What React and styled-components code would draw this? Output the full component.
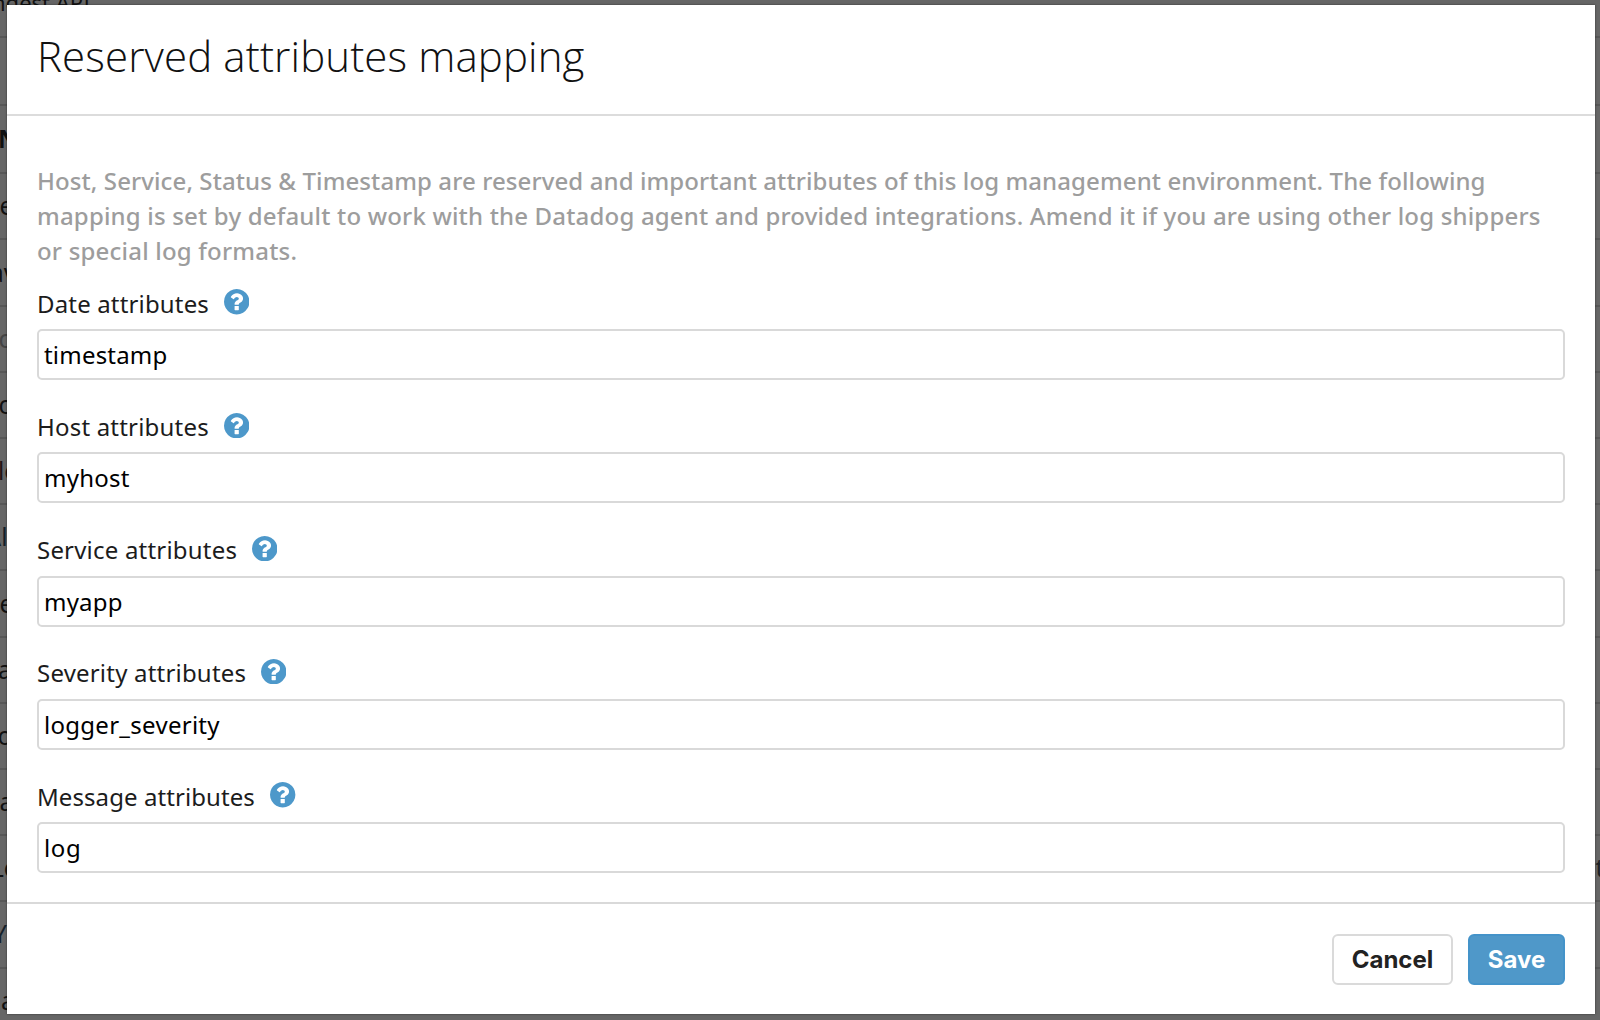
import React from "react";
import styled, { createGlobalStyle } from "styled-components";

const GlobalStyle = createGlobalStyle`
  *, *::before, *::after { box-sizing: border-box; }
  body {
    margin: 0;
    background: #666;
    font-family: "Noto Sans", "Open Sans", sans-serif;
  }
`;

const Page = styled.div`
  position: relative;
  width: 1600px;
  height: 1020px;
  overflow: hidden;
  background: #666;
`;

const Pipelines = styled.div`
  display: flex;
  flex-direction: column;
  height: 100%;
`;

const PipelineRow = styled.div`
  display: flex;
  flex: none;
  align-items: center;
  justify-content: space-between;
  height: ${(p) => p.$height || 66.2}px;
  padding-bottom: ${(p) => p.$lift || 0}px;
  border-bottom: 2px solid #575757;
  overflow: hidden;
  white-space: nowrap;
`;

const PipelineName = styled.span`
  margin-left: ${(p) => p.$shift}px;
  font-size: ${(p) => p.$size || 24.5}px;
  font-weight: ${(p) => (p.$bold ? 700 : 400)};
  line-height: 34px;
  color: ${(p) => p.$color || "#111"};
`;

const PipelineEnd = styled.span`
  width: 4.5px;
  font-size: 24.5px;
  line-height: 34px;
  color: #1d2225;
`;

const Modal = styled.section`
  position: absolute;
  top: 5px;
  left: 7px;
  display: flex;
  flex-direction: column;
  width: 1588px;
  height: 1009px;
  background: #fff;
  box-shadow: 0 0 2px rgba(0, 0, 0, 0.5);
`;

const Header = styled.header`
  height: 111px;
  padding: 21px 30px 0;
  border-bottom: 2px solid #dcdcdc;
`;

const Title = styled.h1`
  margin: 0;
  font-family: "Open Sans", sans-serif;
  font-size: 42px;
  font-weight: 300;
  line-height: 60px;
  letter-spacing: 0.12px;
  color: #111;
`;

const Body = styled.div`
  height: 786px;
  padding: 48px 30px 0;
`;

const Description = styled.p`
  margin: 0 0 20.4px;
  font-size: 24px;
  font-weight: 500;
  line-height: 34.8px;
  color: #9d9d9d;
`;

const Line = styled.span`
  display: block;
  white-space: nowrap;
  letter-spacing: ${(p) => p.$tracking}px;
`;

const Field = styled.div`
  display: flex;
  flex-direction: column;
  gap: 10.4px;
  margin: 0 0 31.8px;
`;

const Label = styled.label`
  display: flex;
  align-items: center;
  gap: ${(p) => p.$gap}px;
  height: 30px;
  font-size: 24px;
  line-height: 30px;
  letter-spacing: ${(p) => p.$tracking}px;
  color: #1c1c1c;
`;

const HelpIcon = styled.svg`
  width: 25.4px;
  height: 25.4px;
  margin-bottom: 3.2px;
  fill: #4d98ca;
`;

const Input = styled.input`
  width: 1528px;
  height: 51px;
  margin: 0;
  padding: 0 5px;
  border: 2px solid #d9d9d9;
  border-radius: 5px;
  outline: none;
  background: #fff;
  font-family: inherit;
  font-size: 24px;
  letter-spacing: ${(p) => p.$tracking}px;
  color: #000;
`;

const Footer = styled.footer`
  display: flex;
  flex: 1;
  align-items: flex-start;
  justify-content: flex-end;
  gap: 15px;
  padding: 30px 30px 0;
  border-top: 2px solid #d9d9d9;
`;

const Button = styled.button`
  width: ${(p) => p.$width}px;
  height: 51px;
  padding: 0;
  border: 2px solid ${(p) => (p.$primary ? "#4493c9" : "#dadada")};
  border-radius: 6px;
  background: ${(p) => (p.$primary ? "#4f98c9" : "#fff")};
  font-family: Inter, sans-serif;
  font-size: 24px;
  font-weight: 700;
  line-height: 47px;
  color: ${(p) => (p.$primary ? "#fff" : "#222")};
`;

const rows = [
  { text: "ngest API", shift: -8, height: 38.3, lift: 32, size: 22 },
  { text: "", shift: 0, height: 68 },
  { text: "N", shift: -2, height: 68, lift: 1, bold: true },
  { text: "e", shift: -0.5 },
  { text: "av", shift: -10 },
  { text: "c", shift: -1.5, color: "#444" },
  { text: "o", shift: -1.5 },
  { text: "lo", shift: -2, color: "#241414" },
  { text: "Al", shift: -14.5, color: "#14202a" },
  { text: "e", shift: -0.5 },
  { text: "a", shift: -2 },
  { text: "o", shift: -2.5 },
  { text: "a", shift: -0.5 },
  { text: "Lo", shift: -9, end: "t" },
  { text: "Y", shift: -7, color: "#14202a" },
  { text: "a", shift: 1 },
];

const fields = [
  { label: "Date attributes", value: "timestamp", gap: 15, tracking: 0.16, valueTracking: 0.2 },
  { label: "Host attributes", value: "myhost", gap: 15.1, tracking: 0.2, valueTracking: 0.25 },
  { label: "Service attributes", value: "myapp", gap: 14.6, tracking: 0.2, valueTracking: 0.2 },
  { label: "Severity attributes", value: "logger_severity", gap: 14.8, tracking: 0.2, valueTracking: 0.28 },
  { label: "Message attributes", value: "log", gap: 15.4, tracking: 0.08, valueTracking: 0.6 },
];

function Help() {
  return (
    <HelpIcon viewBox="0 0 1536 1536" aria-hidden="true">
      <path d="M896 1248v-192q0-14-9-23t-23-9h-192q-14 0-23 9t-9 23v192q0 14 9 23t23 9h192q14 0 23-9t9-23zm256-672q0-88-55.5-163t-138.5-116-170-41q-243 0-371 213-15 24 8 42l132 100q7 6 19 6 16 0 25-12 53-68 86-92 34-24 86-24 48 0 85.5 26t37.5 59q0 38-20 61t-68 45q-63 28-115.5 86.5t-52.5 125.5v36q0 14 9 23t23 9h192q14 0 23-9t9-23q0-19 21.5-49.5t54.5-49.5q32-18 49-28.5t46-35 44.5-48 28-60.5 12.5-81zm384 192q0 209-103 385.5t-279.5 279.5-385.5 103-385.5-103-279.5-279.5-103-385.5 103-385.5 279.5-279.5 385.5-103 385.5 103 279.5 279.5 103 385.5z" />
    </HelpIcon>
  );
}

export default function App() {
  return (
    <Page>
      <GlobalStyle />
      <Pipelines>
        {rows.map((r, i) => (
          <PipelineRow key={i} $height={r.height} $lift={r.lift}>
            <PipelineName $shift={r.shift} $size={r.size} $bold={r.bold} $color={r.color}>
              {r.text}
            </PipelineName>
            {r.end && <PipelineEnd>{r.end}</PipelineEnd>}
          </PipelineRow>
        ))}
      </Pipelines>
      <Modal>
        <Header>
          <Title>Reserved attributes mapping</Title>
        </Header>
        <Body>
          <Description>
            <Line $tracking={0.1}>
              Host, Service, Status &amp; Timestamp are reserved and important attributes of this log
              management environment. The following
            </Line>
            <Line $tracking={0.18}>
              mapping is set by default to work with the Datadog agent and provided integrations.
              Amend it if you are using other log shippers
            </Line>
            <Line $tracking={0.2}>or special log formats.</Line>
          </Description>
          {fields.map((f) => (
            <Field key={f.label}>
              <Label $gap={f.gap} $tracking={f.tracking}>
                {f.label}
                <Help />
              </Label>
              <Input defaultValue={f.value} $tracking={f.valueTracking} />
            </Field>
          ))}
        </Body>
        <Footer>
          <Button $width={121}>Cancel</Button>
          <Button $width={97} $primary>
            Save
          </Button>
        </Footer>
      </Modal>
    </Page>
  );
}
